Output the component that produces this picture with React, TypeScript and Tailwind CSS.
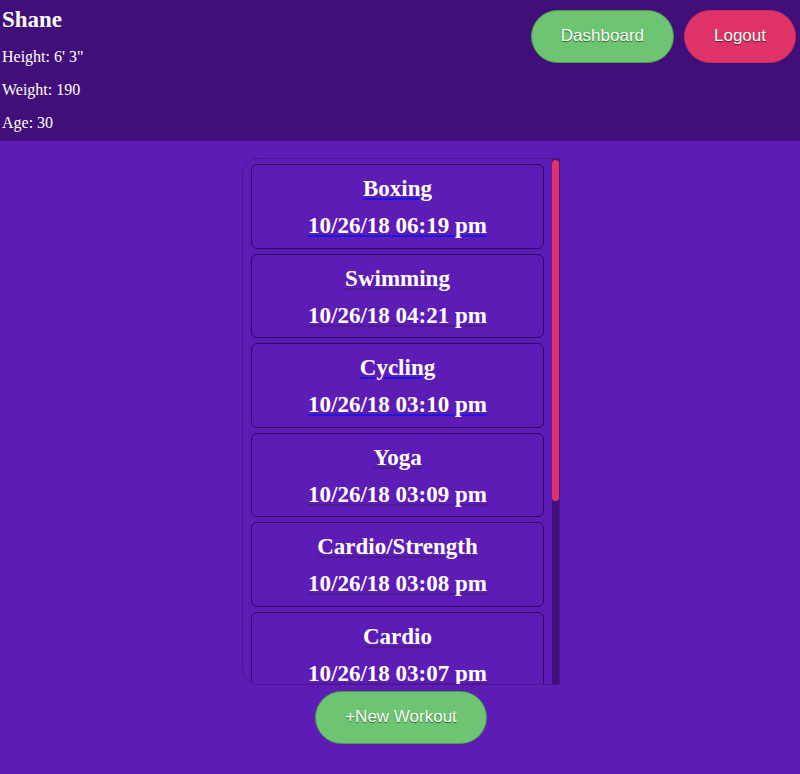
import React from "react";

type Workout = { name: string; time: string; visited: boolean };

const workouts: Workout[] = [
  { name: "Boxing", time: "10/26/18 06:19 pm", visited: false },
  { name: "Swimming", time: "10/26/18 04:21 pm", visited: true },
  { name: "Cycling", time: "10/26/18 03:10 pm", visited: false },
  { name: "Yoga", time: "10/26/18 03:09 pm", visited: true },
  { name: "Cardio/Strength", time: "10/26/18 03:08 pm", visited: true },
  { name: "Cardio", time: "10/26/18 03:07 pm", visited: true },
];

const pill =
  "h-[53px] rounded-full border px-[29px] pb-[2px] font-['Liberation_Sans',Arial,sans-serif] text-[17px] leading-5 text-white whitespace-nowrap cursor-pointer";
const green =
  "bg-[#6dc472] border-[#4c9a45] [text-shadow:0_1px_1px_#2f6627]";
const red =
  "bg-[#df3266] border-[#c92c66] [text-shadow:0_1px_1px_#5b2320]";

function WorkoutCard({ workout }: { workout: Workout }) {
  const line = workout.visited ? "decoration-[#4c1c90]" : "decoration-[#1c18e4]";
  return (
    <a
      href="#"
      className={`block rounded-md border border-[#32085f] pt-[5px] text-center text-[23px] font-bold leading-[37px] text-white underline decoration-2 underline-offset-2 ${line}`}
    >
      <h2>{workout.name}</h2>
      <h2>{workout.time}</h2>
    </a>
  );
}

export default function App() {
  return (
    <div className="min-h-screen bg-[#5e1cb7] font-['Liberation_Serif','Times_New_Roman',serif] text-white">
      <header className="flex items-start justify-between bg-[#410f79] px-[2px] pb-[2px] pt-[6px]">
        <div>
          <h1 className="mb-[6px] text-[23px] font-bold leading-7">Shane</h1>
          <p className="text-base leading-[33px]">Height: 6' 3"</p>
          <p className="text-base leading-[33px]">Weight: 190</p>
          <p className="text-base leading-[33px]">Age: 30</p>
        </div>
        <nav className="mr-[2px] mt-1 flex gap-[10px]">
          <button type="button" className={`${pill} ${green}`}>Dashboard</button>
          <button type="button" className={`${pill} ${red}`}>Logout</button>
        </nav>
      </header>

      <main className="flex flex-col items-center pl-[2px] pt-[17px]">
        <div className="flex h-[527px] w-[318px] overflow-hidden rounded-l-[17px] border border-[#4b168f]">
          <div className="min-w-0 flex-1 overflow-y-auto px-2 pt-[5px] [scrollbar-width:none]">
            <div className="grid h-[532px] grid-rows-6 gap-[5px]">
              {workouts.map((w) => (
                <WorkoutCard key={w.time} workout={w} />
              ))}
            </div>
          </div>
          <div className="w-[7px] bg-[#410f79] pt-px">
            <div className="h-[65%] rounded-full bg-[#df3266]" />
          </div>
        </div>
        <button type="button" className={`mt-[6px] ${pill} ${green}`}>+New Workout</button>
      </main>
    </div>
  );
}
